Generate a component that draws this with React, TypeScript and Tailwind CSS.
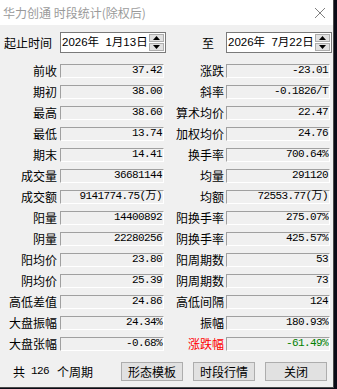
import React from "react";

type Cell = { label: string; value: string; labelClass?: string; valueClass?: string };

const rows: [Cell, Cell][] = [
  [{ label: "前收", value: "37.42" }, { label: "涨跌", value: "-23.01" }],
  [{ label: "期初", value: "38.00" }, { label: "斜率", value: "-0.1826/T" }],
  [{ label: "最高", value: "38.60" }, { label: "算术均价", value: "22.47" }],
  [{ label: "最低", value: "13.74" }, { label: "加权均价", value: "24.76" }],
  [{ label: "期末", value: "14.41" }, { label: "换手率", value: "700.64%" }],
  [{ label: "成交量", value: "36681144" }, { label: "均量", value: "291120" }],
  [{ label: "成交额", value: "9141774.75(万)" }, { label: "均额", value: "72553.77(万)" }],
  [{ label: "阳量", value: "14400892" }, { label: "阳换手率", value: "275.07%" }],
  [{ label: "阴量", value: "22280256" }, { label: "阴换手率", value: "425.57%" }],
  [{ label: "阳均价", value: "23.80" }, { label: "阳周期数", value: "53" }],
  [{ label: "阴均价", value: "25.39" }, { label: "阴周期数", value: "73" }],
  [{ label: "高低差值", value: "24.86" }, { label: "高低间隔", value: "124" }],
  [{ label: "大盘振幅", value: "24.34%" }, { label: "振幅", value: "180.93%" }],
  [
    { label: "大盘张幅", value: "-0.68%" },
    { label: "涨跌幅", value: "-61.49%", labelClass: "text-[#ff0000]", valueClass: "text-[#008000]" },
  ],
];

const cjk = "font-['Noto_Sans_CJK_SC','Noto_Sans',sans-serif]";
const mono = "font-['Liberation_Mono','Noto_Sans_CJK_SC',monospace]";

function Field({ cell }: { cell: Cell }) {
  return (
    <div
      className={`w-[104px] h-[14px] flex items-center justify-end pr-[1px] border-t border-l border-t-[#a0a0a0] border-l-[#a0a0a0] border-b border-r border-b-white border-r-white bg-[#f0f0f0] text-[11px] tracking-[-0.6px] leading-none ${mono} ${cell.valueClass ?? "text-black"}`}
    >
      {cell.value}
    </div>
  );
}

function Spinner() {
  return (
    <div className="flex flex-col w-[15px] h-[17px] gap-[1px] mr-[1px]">
      <div className="flex-1 flex items-center justify-center bg-[#e1e1e1] border border-[#adadad]">
        <svg width="7" height="4" viewBox="0 0 7 4">
          <path d="M3.5 0 L7 4 L0 4 Z" fill="#000" />
        </svg>
      </div>
      <div className="flex-1 flex items-center justify-center bg-[#e1e1e1] border border-[#adadad]">
        <svg width="7" height="4" viewBox="0 0 7 4">
          <path d="M0 0 L7 0 L3.5 4 Z" fill="#000" />
        </svg>
      </div>
    </div>
  );
}

function DateBox({ text }: { text: string }) {
  return (
    <div className="w-[106px] h-[21px] flex items-center justify-between bg-white border border-[#7a7a7a]">
      <span className="pl-[1px] text-[11.5px] text-black whitespace-pre leading-none font-['Liberation_Sans','Noto_Sans_CJK_SC',sans-serif]">
        {text}
      </span>
      <Spinner />
    </div>
  );
}

export default function App() {
  return (
    <div className="w-[337px] h-[389px] bg-[#0b0b16] overflow-hidden">
      <div className={`w-[334px] h-[388px] bg-[#f0f0f0] border-r border-b border-[#4a4a4a] flex flex-col ${cjk}`}>
        {/* 标题栏 */}
        <div className="h-[25px] bg-white flex items-center justify-between pl-[3px] pr-[6px]">
          <span className="text-[12px] text-[#9a9a9a] leading-none">华力创通 时段统计(除权后)</span>
          <svg width="12" height="12" viewBox="0 0 12 12" className="mr-[1px]">
            <path d="M1 1 L11 11 M11 1 L1 11" stroke="#808080" strokeWidth="1" />
          </svg>
        </div>

        {/* 起止时间 */}
        <div className="flex items-center h-[21px] mt-[7px]">
          <span className="w-[60px] pl-[4px] text-[12px] text-black leading-none">起止时间</span>
          <DateBox text="2026年  1月13日" />
          <span className="w-[60px] pl-[36px] text-[12px] text-black leading-none">至</span>
          <DateBox text="2026年  7月22日" />
        </div>

        {/* 统计数据 */}
        <div className="flex flex-col mt-[7px]">
          {rows.map(([l, r]) => (
            <div key={l.label} className="flex items-center h-[21px]">
              <span className={`w-[57px] text-right text-[12px] leading-none ${l.labelClass ?? "text-black"}`}>
                {l.label}
              </span>
              <div className="ml-[3px]">
                <Field cell={l} />
              </div>
              <span className={`w-[60px] text-right text-[12px] leading-none ${r.labelClass ?? "text-black"}`}>
                {r.label}
              </span>
              <div className="ml-[2px]">
                <Field cell={r} />
              </div>
            </div>
          ))}
        </div>

        {/* 底部按钮 */}
        <div className="flex items-center mt-[8px] h-[19px]">
          <div className="pl-[13px] w-[121px] flex items-center text-[12px] text-black leading-none">
            <span>共</span>
            <span className={`ml-[6px] ${mono} text-[11px] tracking-[-0.6px]`}>126</span>
            <span className="ml-[8px]">个周期</span>
          </div>
          <button className="w-[62px] h-[19px] bg-[#e1e1e1] border border-[#adadad] text-[12px] text-black leading-none">
            形态模板
          </button>
          <button className="ml-[10px] w-[62px] h-[19px] bg-[#e1e1e1] border border-[#adadad] text-[12px] text-black leading-none">
            时段行情
          </button>
          <button className="ml-[10px] w-[62px] h-[19px] bg-[#e1e1e1] border border-[#adadad] text-[12px] text-black leading-none">
            关闭
          </button>
        </div>
      </div>
    </div>
  );
}
